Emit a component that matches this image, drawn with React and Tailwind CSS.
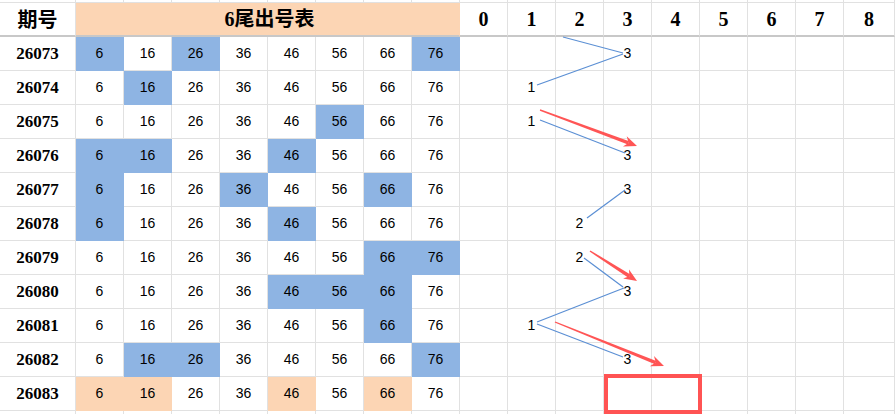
import React from "react";

// 期号, 蓝色格子(下标 0-7 对应 6..76), 右侧走势数字
const rows = [
  { id: "26073", hit: [0, 2, 7], d: 3 },
  { id: "26074", hit: [1], d: 1 },
  { id: "26075", hit: [5], d: 1 },
  { id: "26076", hit: [0, 1, 4], d: 3 },
  { id: "26077", hit: [0, 3, 6], d: 3 },
  { id: "26078", hit: [0, 4], d: 2 },
  { id: "26079", hit: [6, 7], d: 2 },
  { id: "26080", hit: [4, 5, 6], d: 3 },
  { id: "26081", hit: [6], d: 1 },
  { id: "26082", hit: [1, 2, 7], d: 3 },
  { id: "26083", hit: [], peach: [0, 1, 4, 6], d: null },
];

const tails = [6, 16, 26, 36, 46, 56, 66, 76];
const digits = [0, 1, 2, 3, 4, 5, 6, 7, 8];

const blueLines = [
  [563, 37, 623, 53],
  [623, 54, 537, 85],
  [540, 120, 625, 153],
  [625, 190, 587, 218],
  [584, 258, 623, 287],
  [624, 288, 537, 322],
  [537, 324, 623, 357],
];

const arrows = [
  [540, 110, 637, 146],
  [590, 251, 637, 281],
  [555, 322, 664, 366],
];

function Arrow({ x1, y1, x2, y2 }) {
  const dx = x2 - x1;
  const dy = y2 - y1;
  const len = Math.hypot(dx, dy);
  const ux = dx / len;
  const uy = dy / len;
  const nx = -uy;
  const ny = ux;
  const hl = 13;
  const hw = 5.5;
  const bx = x2 - ux * hl;
  const by = y2 - uy * hl;
  const nb = 4;
  const cx = x2 - ux * (hl - nb);
  const cy = y2 - uy * (hl - nb);
  const p = (a, b) => `${a.toFixed(1)},${b.toFixed(1)}`;
  const shaft = [
    p(x1 + nx * 0.7, y1 + ny * 0.7),
    p(cx + nx * 1.8, cy + ny * 1.8),
    p(cx - nx * 1.8, cy - ny * 1.8),
    p(x1 - nx * 0.7, y1 - ny * 0.7),
  ].join(" ");
  const head = [
    p(x2, y2),
    p(bx + nx * hw, by + ny * hw),
    p(cx, cy),
    p(bx - nx * hw, by - ny * hw),
  ].join(" ");
  return (
    <g fill="#ff5555">
      <polygon points={shaft} />
      <polygon points={head} />
    </g>
  );
}

const cell = "border-r border-b border-[#e1e1e1] flex items-center justify-center";

export default function App() {
  return (
    <div className="relative w-[895px] h-[414px] overflow-hidden bg-white text-black">
      <div className="grid grid-cols-[76px_repeat(16,48px)_51px] grid-rows-[3px_34px_repeat(11,34px)_10px]">
        {/* 顶部残留行 */}
        {Array.from({ length: 18 }).map((_, i) => (
          <div key={"t" + i} className="border-r border-b border-[#e1e1e1]" />
        ))}

        {/* 表头 */}
        <div
          className={`${cell} border-b-2 border-b-[#c8c8c8] text-[20px] font-bold`}
          style={{ fontFamily: '"Noto Sans CJK SC", sans-serif' }}
        >
          期号
        </div>
        <div
          className="col-span-8 flex items-center justify-center bg-[#fcd5b4] border-r border-r-[#fcd5b4] border-b-2 border-b-[#c8c8c8] text-[20px] font-bold pl-1"
          style={{ fontFamily: '"Liberation Serif", "Noto Sans CJK SC", serif' }}
        >
          6尾出号表
        </div>
        {digits.map((n) => (
          <div
            key={"h" + n}
            className={`${cell} border-b-2 border-b-[#c8c8c8] text-[20px] font-bold`}
            style={{ fontFamily: '"Liberation Serif", serif' }}
          >
            {n}
          </div>
        ))}

        {/* 数据行 */}
        {rows.map((r) => (
          <React.Fragment key={r.id}>
            <div
              className={`${cell} text-[17px] font-bold`}
              style={{ fontFamily: '"Liberation Serif", serif' }}
            >
              {r.id}
            </div>
            {tails.map((t, i) => {
              const blue = r.hit.includes(i);
              const peach = r.peach && r.peach.includes(i);
              return (
                <div
                  key={t}
                  className={`flex items-center justify-center border-r border-b text-[14px] ${
                    blue
                      ? "bg-[#8eb4e3] border-[#8eb4e3]"
                      : peach
                      ? "bg-[#fcd5b4] border-[#fcd5b4]"
                      : "border-[#e1e1e1]"
                  }`}
                  style={{ fontFamily: '"Liberation Sans", sans-serif' }}
                >
                  {t}
                </div>
              );
            })}
            {digits.map((n) => (
              <div
                key={"d" + n}
                className={`${cell} text-[14px]`}
                style={{ fontFamily: '"Liberation Sans", sans-serif' }}
              >
                {r.d === n ? n : ""}
              </div>
            ))}
          </React.Fragment>
        ))}

        {/* 底部残留行 */}
        {Array.from({ length: 18 }).map((_, i) => (
          <div key={"b" + i} className="border-r border-[#e1e1e1]" />
        ))}
      </div>

      {/* 走势连线 */}
      <svg
        className="absolute inset-0 pointer-events-none"
        width="895"
        height="414"
        viewBox="0 0 895 414"
      >
        {blueLines.map(([x1, y1, x2, y2], i) => (
          <line key={i} x1={x1} y1={y1} x2={x2} y2={y2} stroke="#5b8fd4" strokeWidth="1.2" />
        ))}
        {arrows.map(([x1, y1, x2, y2], i) => (
          <Arrow key={i} x1={x1} y1={y1} x2={x2} y2={y2} />
        ))}
      </svg>

      {/* 预测框 */}
      <div className="absolute left-[604px] top-[374px] w-[98px] h-[40px] border-4 border-[#ff5353]" />
    </div>
  );
}
